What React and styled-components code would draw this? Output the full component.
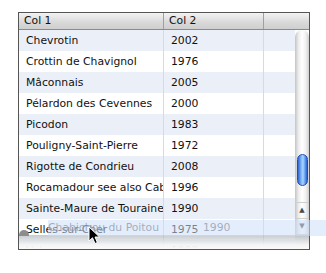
import React from "react";
import styled, { createGlobalStyle } from "styled-components";

const rows = [
  ["Chevrotin", "2002"],
  ["Crottin de Chavignol", "1976"],
  ["Mâconnais", "2005"],
  ["Pélardon des Cevennes", "2000"],
  ["Picodon", "1983"],
  ["Pouligny-Saint-Pierre", "1972"],
  ["Rigotte de Condrieu", "2008"],
  ["Rocamadour see also Cabécou", "1996"],
  ["Sainte-Maure de Touraine", "1990"],
  ["Selles-sur-Cher", "1975"],
  ["Valençay", "1998"],
];

export default function App() {
  return (
    <Page>
      <GlobalStyle />
      <Frame>
        <Header>
          <HeadCell>Col 1</HeadCell>
          <HeadCell>Col 2</HeadCell>
          <HeadCell $last />
        </Header>
        <Body>
          <Rows>
            {rows.map((r, i) => (
              <Row key={r[0]} $alt={i % 2 === 0}>
                <Cell>{r[0]}</Cell>
                <Cell>{r[1]}</Cell>
                <Cell />
              </Row>
            ))}
          </Rows>
          <ScrollBar>
            <Thumb />
            <Spacer />
            <ArrowBtn>▲</ArrowBtn>
            <ArrowBtn>▼</ArrowBtn>
            <Foot />
          </ScrollBar>
          <DropShade>
            <DropKnob />
          </DropShade>
        </Body>
      </Frame>
      <Ghost>
        <GhostCell $w={155}>Chabichou du Poitou</GhostCell>
        <GhostCell>1990</GhostCell>
      </Ghost>
      <Cursor width="14" height="20" viewBox="0 0 14 20">
        <path
          d="M1 1 L1 15 L4.5 11.8 L7 17.5 L9.4 16.5 L7 11 L11.6 11 Z"
          fill="#000"
          stroke="#fff"
          strokeWidth="1"
          strokeLinejoin="round"
        />
      </Cursor>
    </Page>
  );
}

const GlobalStyle = createGlobalStyle`
  body {
    margin: 0;
    background: #fff;
    font-family: "Lucida Grande", "DejaVu Sans", sans-serif;
  }
`;

const Page = styled.div`
  position: relative;
  width: 326px;
  height: 273px;
  padding: 12px 0 0 18px;
  box-sizing: border-box;
`;

const Frame = styled.div`
  width: 292px;
  height: 238px;
  border: 1px solid #555;
  box-sizing: border-box;
  display: flex;
  flex-direction: column;
  overflow: hidden;
`;

const Header = styled.div`
  display: grid;
  grid-template-columns: 145px 100px 1fr;
  height: 16px;
  border-bottom: 1px solid #8a8a8a;
  background: linear-gradient(#f3f3f3, #dadada 55%, #cfcfcf);
`;

const HeadCell = styled.div`
  border-right: ${(p) => (p.$last ? "none" : "1px solid #a0a0a0")};
  padding-left: 5px;
  font-size: 10.8px;
  line-height: 16px;
  color: #111;
`;

const Body = styled.div`
  position: relative;
  flex: 1;
  display: flex;
  overflow: hidden;
`;

const Rows = styled.div`
  flex: 1;
`;

const Row = styled.div`
  display: grid;
  grid-template-columns: 145px 100px 1fr;
  height: 21px;
  background: ${(p) => (p.$alt ? "#ebf0f8" : "#fff")};
`;

const Cell = styled.div`
  border-right: 1px solid #dadada;
  padding-left: 7px;
  font-size: 10.8px;
  line-height: 21px;
  color: #111;
  white-space: nowrap;
  overflow: hidden;
  &:last-child {
    border-right: none;
  }
`;

const ScrollBar = styled.div`
  width: 14px;
  display: flex;
  flex-direction: column;
  align-items: center;
  background: linear-gradient(
    to right,
    #c4c4c4,
    #ececec 25%,
    #ffffff 50%,
    #f2f2f2 75%,
    #d0d0d0
  );
  border-radius: 7px 7px 0 0;
`;

const Thumb = styled.div`
  margin-top: 124px;
  width: 11px;
  height: 32px;
  box-sizing: border-box;
  border: 1px solid #1f4fb5;
  border-radius: 6px;
  background: linear-gradient(
    to right,
    #2c63d6,
    #7eb4f4 35%,
    #a9d6ff 55%,
    #4e8ae6 85%,
    #2a5fd0
  );
`;

const Spacer = styled.div`
  flex: 1;
`;

const ArrowBtn = styled.div`
  width: 14px;
  height: 15px;
  border-top: 1px solid #cfcfcf;
  font-size: 7px;
  line-height: 15px;
  text-align: center;
  color: #4a4a4a;
`;

const Foot = styled.div`
  width: 14px;
  height: 14px;
  background: #ececec;
  border-top: 1px solid #cfcfcf;
`;

const DropShade = styled.div`
  position: absolute;
  left: 0;
  right: 0;
  bottom: 0;
  height: 14px;
  background: linear-gradient(rgba(150, 160, 170, 0.55), rgba(245, 245, 245, 0.9) 70%, #fafafa);
`;

const DropKnob = styled.div`
  position: absolute;
  left: 0;
  top: -5px;
  width: 10px;
  height: 6px;
  border-radius: 6px 6px 0 0;
  background: #8d8d8d;
`;

const Ghost = styled.div`
  position: absolute;
  left: 48px;
  top: 220px;
  width: 278px;
  height: 16px;
  display: flex;
  background: rgba(205, 222, 248, 0.55);
`;

const GhostCell = styled.div`
  width: ${(p) => (p.$w ? `${p.$w}px` : "auto")};
  font-size: 10.8px;
  line-height: 16px;
  color: rgba(130, 145, 165, 0.7);
  white-space: nowrap;
`;

const Cursor = styled.svg`
  position: absolute;
  left: 88px;
  top: 226px;
`;
